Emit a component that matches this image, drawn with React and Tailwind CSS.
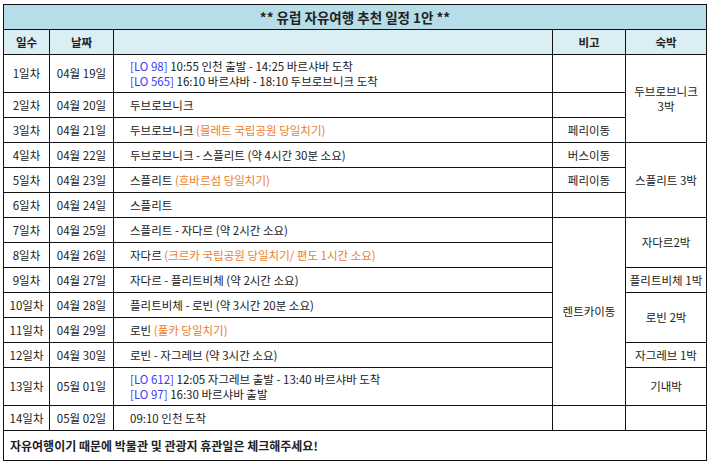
import React from "react";

const B = ({ children }) => <span className="text-[#3b3bf5]">{children}</span>;
const O = ({ children }) => <span className="text-[#ec7d2c]">{children}</span>;

const rows = [
  { day: "1일차", date: "04월 19일", h: "h-[38px]", plan: (<><B>[LO 98]</B> 10:55 인천 출발 - 14:25 바르샤바 도착<br /><B>[LO 565]</B> 16:10 바르샤바 - 18:10 두브로브니크 도착</>) },
  { day: "2일차", date: "04월 20일", plan: "두브로브니크" },
  { day: "3일차", date: "04월 21일", plan: (<>두브로브니크 <O>(믈레트 국립공원 당일치기)</O></>) },
  { day: "4일차", date: "04월 22일", plan: "두브로브니크 - 스플리트 (약 4시간 30분 소요)" },
  { day: "5일차", date: "04월 23일", plan: (<>스플리트 <O>(흐바르섬 당일치기)</O></>) },
  { day: "6일차", date: "04월 24일", plan: "스플리트" },
  { day: "7일차", date: "04월 25일", plan: "스플리트 - 자다르 (약 2시간 소요)" },
  { day: "8일차", date: "04월 26일", plan: (<>자다르 <O>(크르카 국립공원 당일치기/ 편도 1시간 소요)</O></>) },
  { day: "9일차", date: "04월 27일", plan: "자다르 - 플리트비체 (약 2시간 소요)" },
  { day: "10일차", date: "04월 28일", plan: "플리트비체 - 로빈 (약 3시간 20분 소요)" },
  { day: "11일차", date: "04월 29일", plan: (<>로빈 <O>(풀카 당일치기)</O></>) },
  { day: "12일차", date: "04월 30일", plan: "로빈 - 자그레브 (약 3시간 소요)" },
  { day: "13일차", date: "05월 01일", h: "h-[38px]", plan: (<><B>[LO 612]</B> 12:05 자그레브 출발 - 13:40 바르샤바 도착<br /><B>[LO 97]</B> 16:30 바르샤바 출발</>) },
  { day: "14일차", date: "05월 02일", plan: "09:10 인천 도착" },
];

// 비고 / 숙박 cells keyed by row index, with rowspans
const notes = { 0: ["", 1], 1: ["", 1], 2: ["페리이동", 1], 3: ["버스이동", 1], 4: ["페리이동", 1], 5: ["", 1], 6: ["렌트카이동", 7], 13: ["", 1] };
const stays = { 0: ["두브로브니크\n3박", 3], 3: ["스플리트 3박", 3], 6: ["자다르2박", 2], 8: ["플리트비체 1박", 1], 9: ["로빈 2박", 2], 11: ["자그레브 1박", 1], 12: ["기내박", 1], 13: ["", 1] };

const cell = "border border-[#111] text-center align-middle";

export default function App() {
  return (
    <div className="w-[711px] h-[468px] bg-white pt-[4px] pl-[3px] text-[11.5px] leading-[15px] text-[#222]" style={{ fontFamily: '"Noto Sans CJK KR", "Noto Sans", sans-serif' }}>
      <table className="table-fixed border-collapse w-[703px]">
        <colgroup>
          <col className="w-[46px]" />
          <col className="w-[64px]" />
          <col className="w-[439px]" />
          <col className="w-[73px]" />
          <col className="w-[81px]" />
        </colgroup>
        <tbody>
          <tr className="h-[25px] bg-[#b7dde8]">
            <td colSpan={5} className={`${cell} font-bold text-[13.5px]`}>** 유럽 자유여행 추천 일정 1안 **</td>
          </tr>
          <tr className="h-[25px] bg-[#daeef3] font-bold">
            <td className={cell}>일수</td>
            <td className={cell}>날짜</td>
            <td className={cell}></td>
            <td className={cell}>비고</td>
            <td className={cell}>숙박</td>
          </tr>
          {rows.map((r, i) => (
            <tr key={i} className={r.h || "h-[25px]"}>
              <td className={cell}>{r.day}</td>
              <td className={cell}>{r.date}</td>
              <td className="border border-[#111] align-middle text-left pl-[16px] whitespace-nowrap">{r.plan}</td>
              {notes[i] && <td rowSpan={notes[i][1]} className={cell}>{notes[i][0]}</td>}
              {stays[i] && <td rowSpan={stays[i][1]} className={`${cell} whitespace-pre-line`}>{stays[i][0]}</td>}
            </tr>
          ))}
          <tr className="h-[30px]">
            <td colSpan={5} className="border border-[#111] pl-[6px] font-bold text-[12px] align-middle">자유여행이기 때문에 박물관 및 관광지 휴관일은 체크해주세요!</td>
          </tr>
        </tbody>
      </table>
    </div>
  );
}
